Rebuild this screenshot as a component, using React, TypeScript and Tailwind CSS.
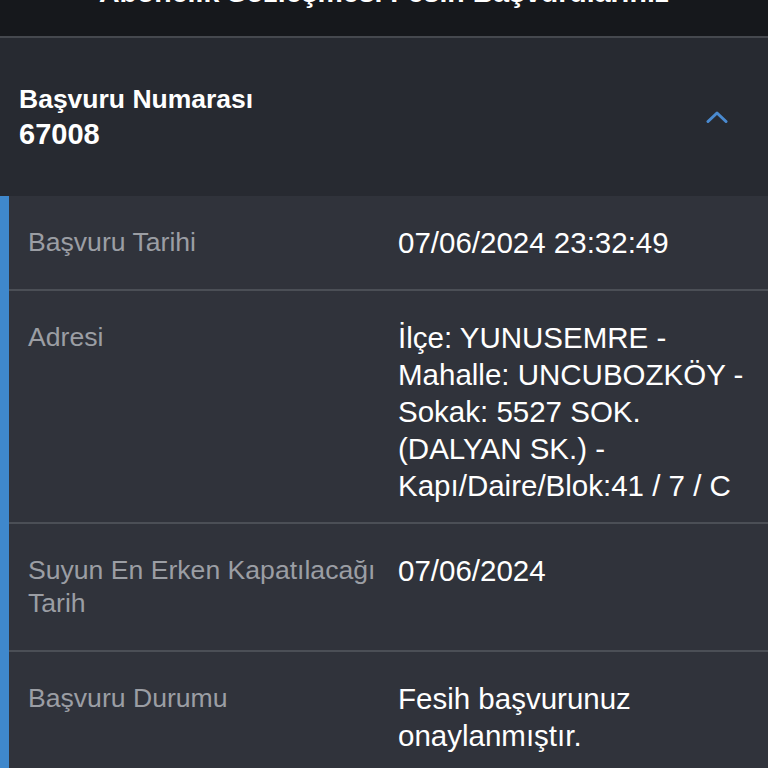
import { useState } from 'react';

const rows = [
  { label: 'Başvuru Tarihi', value: '07/06/2024 23:32:49' },
  {
    label: 'Adresi',
    value: 'İlçe: YUNUSEMRE - Mahalle: UNCUBOZKÖY - Sokak: 5527 SOK. (DALYAN SK.) - Kapı/Daire/Blok:41 / 7 / C',
  },
  { label: 'Suyun En Erken Kapatılacağı Tarih', value: '07/06/2024' },
  { label: 'Başvuru Durumu', value: 'Fesih başvurunuz onaylanmıştır.' },
];

export default function App() {
  const [open, setOpen] = useState(true);

  return (
    <div className="h-[768px] w-[768px] overflow-hidden bg-[#30333b] font-['Liberation_Sans',Arial,sans-serif]">
      {/* page title, scrolled mostly out of view */}
      <div className="h-[38px] overflow-hidden border-b-2 border-[#45484e] bg-[#16181c]">
        <h1 className="mt-[-22px] whitespace-nowrap text-center text-[28.5px] font-bold leading-[29px] text-white">
          Abonelik Sözleşmesi Fesih Başvurularınız
        </h1>
      </div>

      <button
        onClick={() => setOpen(!open)}
        className="flex h-[158px] w-full items-center justify-between bg-[#272a31] pl-[19px] pr-[40px] text-left"
      >
        <div className="text-white font-bold">
          <div className="text-[26.5px] leading-[35px]">Başvuru Numarası</div>
          <div className="text-[29px] leading-[35px]">67008</div>
        </div>
        <svg className={`h-[14px] w-[22px] ${open ? '' : 'rotate-180'}`} viewBox="0 0 22 14" fill="none">
          <path d="M2 11.5L11 3l9 8.5" stroke="#4a8ad0" strokeWidth="3" strokeLinecap="round" strokeLinejoin="round" />
        </svg>
      </button>

      {open && (
        <div className="flex">
          <div className="w-[9px] shrink-0 bg-[#3f88cc]" />
          <div className="flex-1">
            {rows.map((row, i) => (
              <div key={row.label}>
                {i > 0 && <div className="h-[2px] bg-[#4b4f56]" />}
                <div className="flex items-start">
                  <div className="w-[389px] shrink-0 py-[30px] pl-[19px] pr-[14px] text-[26.6px] leading-[33px] text-[#9b9ea4]">
                    {row.label}
                  </div>
                  <div className="flex-1 pt-[28px] pb-[18px] pr-[14px] text-[29.5px] leading-[37px] text-white">
                    {row.value}
                  </div>
                </div>
              </div>
            ))}
          </div>
        </div>
      )}
    </div>
  );
}
